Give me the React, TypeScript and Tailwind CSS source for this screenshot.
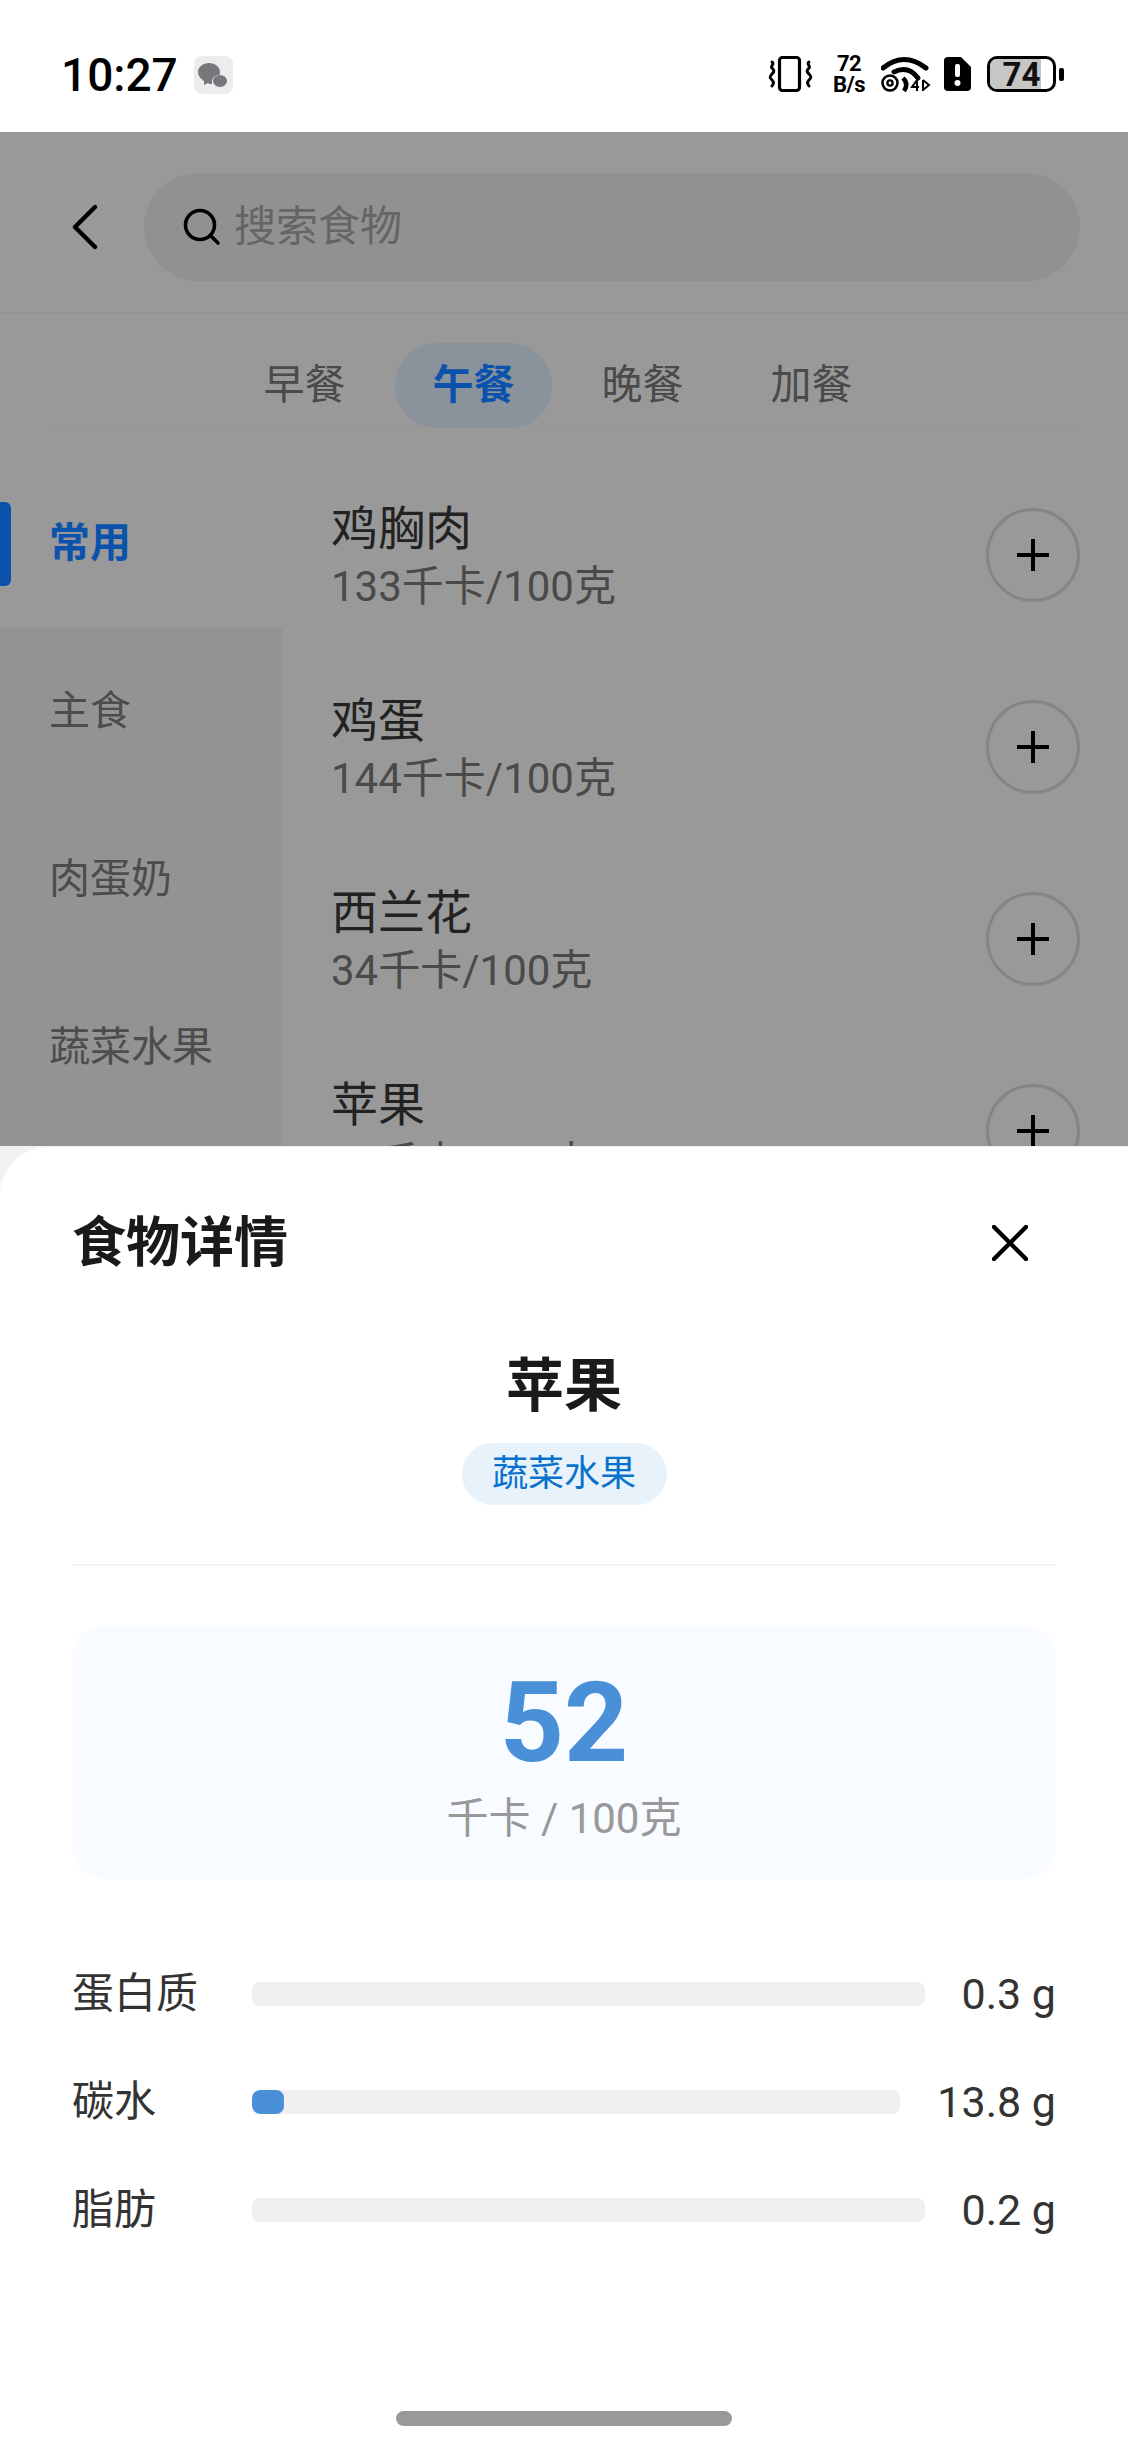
const meals = ["早餐", "午餐", "晚餐", "加餐"];
const categories = ["主食", "肉蛋奶", "蔬菜水果"];
const foods = [
  { name: "鸡胸肉", info: "133千卡/100克" },
  { name: "鸡蛋", info: "144千卡/100克" },
  { name: "西兰花", info: "34千卡/100克" },
  { name: "苹果", info: "52千卡/100克" },
];
const macros = [
  { label: "蛋白质", value: "0.3 g", fill: 0 },
  { label: "碳水", value: "13.8 g", fill: 32 },
  { label: "脂肪", value: "0.2 g", fill: 0 },
];

function StatusIcons() {
  return (
    <div className="flex items-center">
      {/* vibrate */}
      <svg className="w-[46px] h-[36px] text-black" viewBox="0 0 46 36" fill="none" stroke="currentColor">
        <rect x="11.5" y="1.5" width="20" height="33" rx="3" strokeWidth="3.2" />
        <path d="M4 6c3 2-2 4 0 6s3 3 0 6 -2 4 0 6 2 3 0 6" strokeWidth="3" strokeLinecap="round" />
        <path d="M41 6c-3 2 2 4 0 6s-3 3 0 6 2 4 0 6 -2 3 0 6" strokeWidth="3" strokeLinecap="round" />
      </svg>
      {/* network speed */}
      <div className="ml-[16px] w-[38px] flex flex-col items-center text-[22px] leading-[21px] font-bold text-black tracking-[-0.5px]">
        <span>72</span>
        <span>B/s</span>
      </div>
      {/* wifi */}
      <svg className="ml-[13px] w-[50px] h-[36px] text-black" viewBox="0 0 50 36" fill="none" stroke="currentColor">
        <path d="M2 12Q23 -5 45 12" strokeWidth="5" strokeLinecap="round" />
        <path d="M13 16Q27 9 37 22" strokeWidth="5" strokeLinecap="round" />
        <circle cx="9" cy="27" r="7.5" strokeWidth="2.6" />
        <circle cx="9" cy="27" r="2.6" strokeWidth="2.4" />
        <path d="M22 22Q28 28 23 35" strokeWidth="4.5" />
        <path d="M36 35v-11l-5 7h7M42 35v-11M42 24l6 5-6 5" strokeWidth="2" />
      </svg>
      {/* sim alert */}
      <svg className="ml-[12px] w-[29px] h-[36px]" viewBox="0 0 29 36">
        <path d="M5 1h13l10 10v20a4 4 0 0 1-4 4H5a4 4 0 0 1-4-4V5a4 4 0 0 1 4-4z" fill="#000" />
        <rect x="12" y="8" width="5" height="13" rx="2" fill="#fff" />
        <circle cx="14.5" cy="27" r="3" fill="#fff" />
      </svg>
      {/* battery */}
      <div className="ml-[15px] relative w-[69px] h-[36px] rounded-[10px] border-[3px] border-black overflow-hidden flex items-center justify-center">
        <div className="absolute left-0 top-0 bottom-0 w-[51px] bg-[#c6c6c6]" />
        <span className="relative text-[33px] leading-none font-bold text-[#111]">74</span>
      </div>
      <div className="ml-[3px] w-[5px] h-[13px] rounded-[2px] bg-black" />
    </div>
  );
}

function StatusBar() {
  return (
    <div className="h-[132px] bg-white pl-[61px] pr-[64px] pt-[53px] flex items-start justify-between">
      <div className="flex items-center">
        <span className="text-[46px] leading-[44px] font-medium text-black">10:27</span>
        <div className="ml-[16px] w-[39px] h-[38px] rounded-[8px] bg-[#ececec] flex items-center justify-center">
          <svg className="w-[30px] h-[26px]" viewBox="0 0 30 26">
            <path d="M11 1c6 0 11 4 11 9 0 1 0 2-1 3-4 0-7 3-7 7 0 1 0 1 0 2-2 0-3 0-4-1l-4 2 0-4C3 17 0 14 0 10 0 5 5 1 11 1z" fill="#77777c" />
            <ellipse cx="22" cy="19" rx="7" ry="6" fill="#77777c" />
          </svg>
        </div>
      </div>
      <StatusIcons />
    </div>
  );
}

function SearchHeader() {
  return (
    <div className="h-[181px] flex items-center pl-[72px] pr-[48px] pt-[10px] border-b border-[#929292]">
      <svg className="w-[26px] h-[46px] shrink-0 text-black" viewBox="0 0 26 46" fill="none" stroke="currentColor" strokeWidth="4.4" strokeLinecap="round" strokeLinejoin="round">
        <path d="M23 3L3 23l20 20" />
      </svg>
      <div className="ml-[46px] flex-1 h-[108px] rounded-full bg-[#919191] flex items-center pl-[39px]">
        <svg className="w-[38px] h-[38px] shrink-0 text-black" viewBox="0 0 38 38" fill="none" stroke="currentColor" strokeLinecap="round">
          <circle cx="17" cy="17" r="14.5" strokeWidth="3.6" />
          <path d="M28 28l7 7" strokeWidth="3.6" />
        </svg>
        <span className="ml-[13px] text-[42px] leading-none text-[#656565]">搜索食物</span>
      </div>
    </div>
  );
}

function MealTabs() {
  return (
    <div className="mx-[50px] h-[113px] border-b border-[#949494] pr-[12px]">
      <div className="pt-[30px] flex items-start justify-center gap-[12px]">
        {meals.map((m, i) => (
          <div
            key={m}
            className={
              i === 1
                ? "w-[157px] h-[85px] rounded-[42px] bg-[#8a929c] flex items-center justify-center text-[41px] font-bold text-[#0b52ac]"
                : "w-[157px] h-[85px] flex items-center justify-center text-[41px] text-[#4a4a4a]"
            }
          >
            {m}
          </div>
        ))}
      </div>
    </div>
  );
}

function Sidebar() {
  return (
    <div className="w-[282px] shrink-0 flex flex-col">
      <div className="relative h-[202px] flex items-center pl-[49px] pt-[34px] text-[41px] font-bold text-[#0b52ac]">
        <div className="absolute left-0 top-[76px] w-[11px] h-[84px] rounded-r-[6px] bg-[#0b52ac]" />
        常用
      </div>
      <div className="flex-1 bg-[#939393]">
        {categories.map((c) => (
          <div key={c} className="h-[168px] flex items-center pl-[49px] text-[41px] text-[#4c4c4c]">
            {c}
          </div>
        ))}
      </div>
    </div>
  );
}

function FoodList() {
  return (
    <div className="flex-1 pl-[49px] pr-[48px] pt-[57px] flex flex-col gap-[48px]">
      {foods.map((f) => (
        <div key={f.name} className="h-[144px] shrink-0 flex items-center justify-between">
          <div className="flex flex-col pt-[3px]">
            <span className="text-[47px] leading-[60px] text-[#222222]">{f.name}</span>
            <span className="text-[42px] leading-[56px] text-[#4a4a4a]">{f.info}</span>
          </div>
          <div className="w-[94px] h-[94px] rounded-full border-[3px] border-[#858585] flex items-center justify-center">
            <svg className="w-[32px] h-[32px] text-black" viewBox="0 0 32 32" fill="none" stroke="currentColor" strokeWidth="4">
              <path d="M16 0v32M0 16h32" />
            </svg>
          </div>
        </div>
      ))}
    </div>
  );
}

function DetailSheet() {
  return (
    <div className="absolute left-0 right-0 top-[1146px] bottom-0 bg-[#f2f2f2] pt-[1px]">
      <div className="h-full bg-white rounded-tl-[48px] px-[72px] flex flex-col">
        <div className="mt-[62px] h-[70px] flex items-center justify-between">
          <span className="text-[54px] leading-none font-bold text-[#1a1a1a]">食物详情</span>
          <svg className="mr-[28px] -mt-[2px] w-[36px] h-[36px] text-black" viewBox="0 0 36 36" fill="none" stroke="currentColor" strokeWidth="4.4" strokeLinecap="round">
            <path d="M2 2l32 32M34 2L2 34" />
          </svg>
        </div>

        <div className="mt-[71px] flex flex-col items-center">
          <span className="text-[58px] leading-[72px] font-bold text-[#1a1a1a]">苹果</span>
          <span className="mt-[21px] w-[205px] h-[62px] rounded-full bg-[#e8f2fb] flex items-center justify-center text-[36px] text-[#0a72cc]">
            蔬菜水果
          </span>
        </div>

        <div className="mt-[59px] h-[2px] bg-[#f4f4f4]" />

        <div className="mt-[60px] h-[253px] rounded-[32px] bg-[#f8fbff] flex flex-col items-center pt-[32px]">
          <span className="text-[112px] leading-[130px] font-bold text-[#4a90d9]">52</span>
          <span className="mt-[3px] text-[42px] leading-[56px] text-[#999999]">千卡 / 100克</span>
        </div>

        <div className="mt-[87px] flex flex-col gap-[52px]">
          {macros.map((m) => (
            <div key={m.label} className="h-[56px] flex items-center">
              <span className="w-[180px] shrink-0 text-[42px] leading-none text-[#333333]">{m.label}</span>
              <div className="flex-1 h-[24px] rounded-[8px] bg-[#f0f0f0] overflow-hidden">
                {m.fill > 0 && <div className="h-full rounded-[8px] bg-[#4a90d9]" style={{ width: m.fill }} />}
              </div>
              <span className="ml-[37px] text-[43px] leading-none text-[#333333]">{m.value}</span>
            </div>
          ))}
        </div>

        <div className="mt-auto mb-[18px] mx-auto w-[336px] h-[15px] rounded-full bg-[#999999]" />
      </div>
    </div>
  );
}

export default function App() {
  return (
    <div className="relative w-[1128px] h-[2444px] overflow-hidden bg-[#999999] font-['Roboto','Noto_Sans_CJK_SC',sans-serif]">
      <StatusBar />
      <SearchHeader />
      <MealTabs />
      <div className="flex h-[1200px]">
        <Sidebar />
        <FoodList />
      </div>
      <DetailSheet />
    </div>
  );
}
